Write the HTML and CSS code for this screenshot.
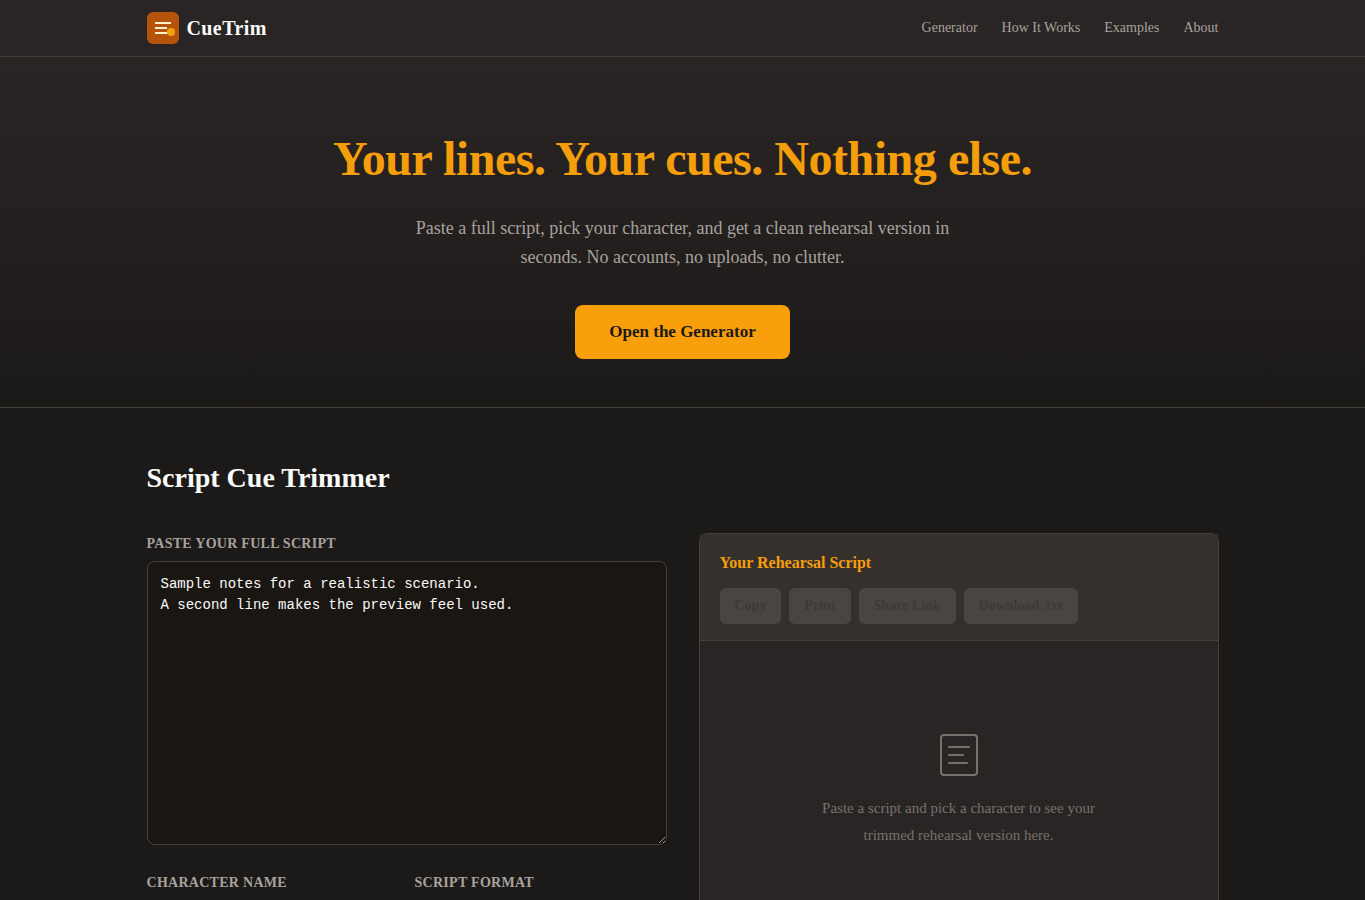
FILE: index.html
```
<!DOCTYPE html>
<html lang="en">

<head>
    <meta charset="UTF-8">
    <meta name="viewport" content="width=device-width, initial-scale=1">
    <title>CueTrim</title>
    <link rel="stylesheet" href="styles.css">
</head>

<body>
    <header class="site-header">
        <div class="container header-row">
            <a href="#" class="logo">
                <svg width="32" height="32" viewBox="0 0 32 32" aria-hidden="true">
                    <rect width="32" height="32" rx="6" fill="#b45309" />
                    <path d="M8 11h16M8 16h12M8 21h14" stroke="#fef3c7" stroke-width="2" />
                    <circle cx="24" cy="20" r="4" fill="#f59e0b" />
                </svg>
                <span>CueTrim</span>
            </a>
            <nav>
                <a href="#generator">Generator</a>
                <a href="#how">How It Works</a>
                <a href="#examples">Examples</a>
                <a href="#about">About</a>
            </nav>
        </div>
    </header>

    <section class="hero">
        <h1>Your lines. Your cues. Nothing else.</h1>
        <p>Paste a full script, pick your character, and get a clean rehearsal version in seconds. No accounts, no uploads, no clutter.</p>
        <a href="#generator" class="cta">Open the Generator</a>
    </section>

    <main class="container generator" id="generator">
        <h2>Script Cue Trimmer</h2>
        <div class="columns">
            <form class="script-form">
                <div class="field">
                    <label for="script">Paste your full script</label>
                    <textarea id="script" spellcheck="false">Sample notes for a realistic scenario.
A second line makes the preview feel used.</textarea>
                </div>
                <div class="field-row">
                    <div class="field">
                        <label for="character">Character name</label>
                        <input type="text" id="character">
                    </div>
                    <div class="field">
                        <label for="format">Script format</label>
                        <select id="format">
                            <option>Auto</option>
                        </select>
                    </div>
                </div>
            </form>

            <section class="output">
                <div class="output-header">
                    <h3>Your Rehearsal Script</h3>
                    <div class="actions">
                        <button type="button" disabled>Copy</button>
                        <button type="button" disabled>Print</button>
                        <button type="button" disabled>Share Link</button>
                        <button type="button" disabled>Download .txt</button>
                    </div>
                </div>
                <div class="output-empty">
                    <svg width="48" height="48" viewBox="0 0 48 48" fill="none" stroke="#78716c" stroke-width="2" stroke-linecap="round" aria-hidden="true">
                        <rect x="6" y="4" width="36" height="40" rx="3" />
                        <path d="M14 16h20M14 24h14M14 32h18" />
                    </svg>
                    <p>Paste a script and pick a character to see your trimmed rehearsal version here.</p>
                </div>
            </section>
        </div>
    </main>
</body>

</html>
```
FILE: styles.css
```
* {
    box-sizing: border-box;
    margin: 0;
    padding: 0;
}

body {
    background-color: #1c1a18;
    color: #fafaf9;
    font-family: "Liberation Serif", serif;
    font-size: 16px;
    line-height: 26px;
}

a {
    text-decoration: none;
}

.container {
    max-width: 1120px;
    margin: 0 auto;
    padding: 0 24px;
}

/* header */
.site-header {
    background-color: #292524;
    border-bottom: 1px solid #44403c;
}

.header-row {
    display: flex;
    justify-content: space-between;
    align-items: center;
    min-height: 56px;
}

.logo {
    display: flex;
    align-items: center;
    gap: 8px;
    color: #fafaf9;
    font-size: 20px;
    font-weight: bold;
    letter-spacing: 0.02em;
}

nav {
    display: flex;
    gap: 24px;
}

nav a {
    color: #a8a29e;
    font-size: 14px;
}

/* hero */
.hero {
    padding: 64px 24px 48px;
    text-align: center;
    background: linear-gradient(180deg, #292524, #1c1a18);
    border-bottom: 1px solid #44403c;
}

.hero h1 {
    margin-bottom: 18px;
    color: #f59e0b;
    font-size: 48px;
    line-height: 75px;
    letter-spacing: -0.01em;
}

.hero p {
    max-width: 560px;
    margin: 0 auto 33px;
    color: #a8a29e;
    font-size: 18px;
    line-height: 29px;
}

.cta {
    display: inline-block;
    padding: 14px 34px;
    border-radius: 8px;
    background-color: #f99f0b;
    color: #1c1a18;
    font-size: 17px;
    font-weight: bold;
    vertical-align: top;
}

/* generator */
.generator {
    padding-top: 48px;
    padding-bottom: 48px;
}

.generator h2 {
    margin-bottom: 34px;
    font-size: 28px;
    line-height: 43px;
}

.columns {
    display: grid;
    grid-template-columns: 1fr 1fr;
    gap: 32px;
}

.script-form {
    display: flex;
    flex-direction: column;
    gap: 27px;
}

.field-row {
    display: grid;
    grid-template-columns: 1fr 1fr;
    gap: 16px;
}

.field label {
    display: block;
    margin-bottom: 6px;
    color: #a8a29e;
    font-size: 14px;
    font-weight: bold;
    line-height: 22px;
    letter-spacing: 0.02em;
    text-transform: uppercase;
}

.field textarea,
.field input,
.field select {
    display: block;
    width: 100%;
    padding: 12px 13px;
    border: 1px solid #44403c;
    border-radius: 8px;
    background-color: #1a1612;
    color: #fafaf9;
    font-size: 14px;
}

.field textarea {
    height: 284px;
    font-family: "Liberation Mono", monospace;
    line-height: 21px;
    resize: vertical;
}

/* output panel */
.output {
    min-height: 480px;
    border: 1px solid #44403c;
    border-radius: 8px;
    background-color: #292524;
}

.output-header {
    padding: 16px 20px;
    border-bottom: 1px solid #44403c;
    background-color: #35302c;
}

.output-header h3 {
    margin-bottom: 12px;
    color: #f59e0b;
    font-size: 16px;
}

.actions {
    display: flex;
    flex-wrap: wrap;
    gap: 8px;
}

.actions button {
    height: 36px;
    padding: 0 15px;
    border: none;
    border-radius: 6px;
    background-color: #4a4541;
    color: #3f3a36;
    font-family: inherit;
    font-size: 14px;
    font-weight: bold;
}

.output-empty {
    display: flex;
    flex-direction: column;
    align-items: center;
    gap: 16px;
    padding: 90px 20px;
    color: #78716c;
    text-align: center;
}

.output-empty p {
    max-width: 300px;
    font-size: 15px;
    line-height: 27px;
}
```
